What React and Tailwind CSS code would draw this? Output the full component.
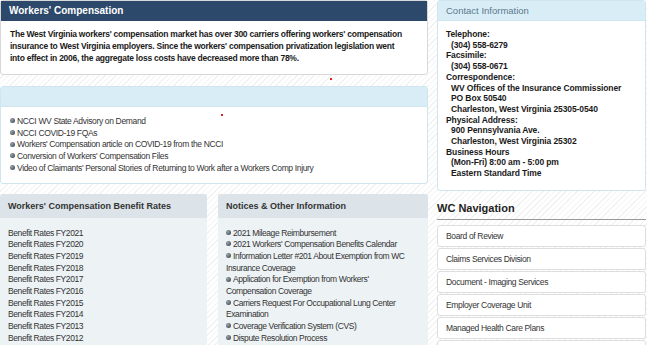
import React from "react";

const arial = { fontFamily: '"Liberation Sans", Arial, sans-serif' };

const news = [
  "NCCI WV State Advisory on Demand",
  "NCCI COVID-19 FQAs",
  "Workers' Compensation article on COVID-19 from the NCCI",
  "Conversion of Workers' Compensation Files",
  "Video of Claimants' Personal Stories of Returning to Work after a Workers Comp Injury",
];

const rates = [2021, 2020, 2019, 2018, 2017, 2016, 2015, 2014, 2013, 2012];

const notices = [
  "2021 Mileage Reimbursement",
  "2021 Workers' Compensation Benefits Calendar",
  "Information Letter #201 About Exemption from WC Insurance Coverage",
  "Application for Exemption from Workers' Compensation Coverage",
  "Carriers Request For Occupational Lung Center Examination",
  "Coverage Verification System (CVS)",
  "Dispute Resolution Process",
];

const nav = [
  "Board of Review",
  "Claims Services Division",
  "Document - Imaging Services",
  "Employer Coverage Unit",
  "Managed Health Care Plans",
  "Office of Judges",
];

function Bullet() {
  return (
    <span className="inline-block w-[5px] h-[5px] rounded-full bg-[radial-gradient(circle_at_35%_35%,#9aa3ab,#2f3a44)] mr-[2px] align-middle relative -top-[1px]" />
  );
}

export default function App() {
  return (
    <div
      className="w-[647px] h-[345px] overflow-hidden relative bg-[repeating-linear-gradient(135deg,#ffffff_0px,#ffffff_3px,#f2f2f2_3px,#f2f2f2_4px)] text-[#222]"
      style={arial}
    >
      <div className="flex gap-[9px]">
        {/* left column */}
        <div className="w-[428px] flex flex-col">
          <div className="border border-[#d8d8d8] rounded-[3px] bg-white">
            <div className="h-[20px] bg-[#2c496b] text-white font-bold text-[10px] px-[8px] leading-[20px]">
              Workers' Compensation
            </div>
            <p className="px-[9px] pt-[7px] pb-[10px] text-[8.5px] tracking-[-0.25px] leading-[12px] font-bold text-[#1a1a1a] whitespace-nowrap">
              The West Virginia workers' compensation market has over 300 carriers offering workers' compensation
              <br />
              insurance to West Virginia employers. Since the workers' compensation privatization legislation went
              <br />
              into effect in 2006, the aggregate loss costs have decreased more than 78%.
            </p>
          </div>

          <div className="mt-[11px] border border-[#cfe6ef] rounded-[3px] bg-white">
            <div className="h-[20px] bg-[#d9edf7] border-b border-[#cfe6ef]" />
            <ul className="px-[9px] pt-[9px] pb-[8px] text-[8.5px] tracking-[-0.35px] leading-[11.7px] text-[#333]">
              {news.map((n) => (
                <li key={n}>
                  <Bullet />
                  {n}
                </li>
              ))}
            </ul>
          </div>

          <div className="mt-[10px] flex gap-[11px]">
            <div className="w-[207px] h-[160px] bg-[#edf2f5] rounded-[3px] overflow-hidden">
              <div className="h-[24px] bg-[#dce3e9] px-[8px] leading-[24px] text-[9px] font-bold text-[#333]">
                Workers' Compensation Benefit Rates
              </div>
              <ul className="px-[8px] pt-[10px] text-[8.5px] tracking-[-0.4px] leading-[11.7px] text-[#333]">
                {rates.map((r) => (
                  <li key={r}>Benefit Rates FY{r}</li>
                ))}
              </ul>
            </div>
            <div className="w-[210px] h-[160px] bg-[#edf2f5] rounded-[3px] overflow-hidden">
              <div className="h-[24px] bg-[#dce3e9] px-[8px] leading-[24px] text-[9px] font-bold text-[#333]">
                Notices &amp; Other Information
              </div>
              <ul className="px-[8px] pt-[10px] text-[8.5px] tracking-[-0.4px] leading-[11.7px] text-[#333]">
                {notices.map((n) => (
                  <li key={n}>
                    <Bullet />
                    {n}
                  </li>
                ))}
              </ul>
            </div>
          </div>
        </div>

        {/* right column */}
        <div className="w-[209px] flex flex-col">
          <div className="h-[191px] border border-[#cfe6ef] rounded-[3px] bg-white">
            <div className="h-[20px] bg-[#d9edf7] border-b border-[#cfe6ef] px-[8px] leading-[20px] text-[9.5px] text-[#5b7a8c]">
              Contact Information
            </div>
            <div className="px-[8px] pt-[8px] text-[8.5px] tracking-[-0.1px] leading-[10.7px] font-bold text-[#1a1a1a] whitespace-nowrap">
              <div>Telephone:</div>
              <div className="pl-[5px]">(304) 558-6279</div>
              <div>Facsimile:</div>
              <div className="pl-[5px]">(304) 558-0671</div>
              <div>Correspondence:</div>
              <div className="pl-[5px]">WV Offices of the Insurance Commissioner</div>
              <div className="pl-[5px]">PO Box 50540</div>
              <div className="pl-[5px]">Charleston, West Virginia 25305-0540</div>
              <div>Physical Address:</div>
              <div className="pl-[5px]">900 Pennsylvania Ave.</div>
              <div className="pl-[5px]">Charleston, West Virginia 25302</div>
              <div>Business Hours</div>
              <div className="pl-[5px]">(Mon-Fri) 8:00 am - 5:00 pm</div>
              <div className="pl-[5px]">Eastern Standard Time</div>
            </div>
          </div>

          <div className="mt-[9px] pb-[2px] border-b border-[#9a9a9a] text-[11px] font-bold text-[#222]">
            WC Navigation
          </div>
          <div className="mt-[5px] flex flex-col gap-[1px]">
            {nav.map((n) => (
              <div key={n} className="h-[22px] bg-white border border-[#dedede] rounded-[3px] px-[8px] leading-[20px] text-[8.5px] tracking-[-0.35px] text-[#333]">
                {n}
              </div>
            ))}
          </div>
        </div>
      </div>

      <span className="absolute left-[330px] top-[78px] w-[2px] h-[2px] bg-[#e02020]" />
      <span className="absolute left-[221px] top-[114px] w-[2px] h-[2px] bg-[#e02020]" />
    </div>
  );
}
